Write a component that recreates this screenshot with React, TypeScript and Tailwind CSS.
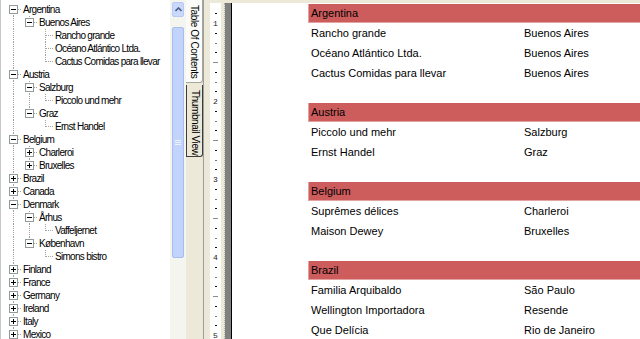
import React from 'react';

type Node = { label: string; open?: boolean; children?: Node[] };

const tree: Node[] = [
  {
    label: 'Argentina',
    open: true,
    children: [
      {
        label: 'Buenos Aires',
        open: true,
        children: [{ label: 'Rancho grande' }, { label: 'Océano Atlántico Ltda.' }, { label: 'Cactus Comidas para llevar' }],
      },
    ],
  },
  {
    label: 'Austria',
    open: true,
    children: [
      { label: 'Salzburg', open: true, children: [{ label: 'Piccolo und mehr' }] },
      { label: 'Graz', open: true, children: [{ label: 'Ernst Handel' }] },
    ],
  },
  {
    label: 'Belgium',
    open: true,
    children: [
      { label: 'Charleroi', children: [{ label: 'x' }] },
      { label: 'Bruxelles', children: [{ label: 'x' }] },
    ],
  },
  { label: 'Brazil', children: [{ label: 'x' }] },
  { label: 'Canada', children: [{ label: 'x' }] },
  {
    label: 'Denmark',
    open: true,
    children: [
      { label: 'Århus', open: true, children: [{ label: 'Vaffeljernet' }] },
      { label: 'København', open: true, children: [{ label: 'Simons bistro' }] },
    ],
  },
  { label: 'Finland', children: [{ label: 'x' }] },
  { label: 'France', children: [{ label: 'x' }] },
  { label: 'Germany', children: [{ label: 'x' }] },
  { label: 'Ireland', children: [{ label: 'x' }] },
  { label: 'Italy', children: [{ label: 'x' }] },
  { label: 'Mexico', children: [{ label: 'x' }] },
];

type Row = { label: string; level: number; box: '+' | '-' | null; last: boolean; first: boolean; guides: boolean[] };

function flatten(nodes: Node[], level: number, guides: boolean[], out: Row[]) {
  nodes.forEach((n, i) => {
    // root list continues below the visible area, so the root line never ends
    const last = level > 0 && i === nodes.length - 1;
    const hasKids = !!n.children && n.children.length > 0;
    out.push({
      label: n.label,
      level,
      box: hasKids ? (n.open ? '-' : '+') : null,
      last,
      first: level === 0 && i === 0,
      guides,
    });
    if (hasKids && n.open) flatten(n.children!, level + 1, [...guides, !last], out);
  });
  return out;
}

const rows = flatten(tree, 0, [], []);

const DOT = '#a3a39a';

function GuideCell({ on }: { on: boolean }) {
  return (
    <svg width="16" height="13" className="shrink-0" shapeRendering="crispEdges">
      {on && <line x1="8.5" y1="0" x2="8.5" y2="13" stroke={DOT} strokeDasharray="1 1" />}
    </svg>
  );
}

function NodeCell({ row }: { row: Row }) {
  return (
    <svg width="16" height="13" className="shrink-0" shapeRendering="crispEdges">
      {!row.first && <line x1="8.5" y1="0" x2="8.5" y2="6.5" stroke={DOT} strokeDasharray="1 1" />}
      {!row.last && <line x1="8.5" y1="6" x2="8.5" y2="13" stroke={DOT} strokeDasharray="1 1" />}
      <line x1="9" y1="6.5" x2="16" y2="6.5" stroke={DOT} strokeDasharray="1 1" />
      {row.box && (
        <g>
          <rect x="4.5" y="2.5" width="8" height="8" fill="#fff" stroke="#919b9c" />
          <line x1="6" y1="6.5" x2="11" y2="6.5" stroke="#000" />
          {row.box === '+' && <line x1="8.5" y1="4" x2="8.5" y2="9" stroke="#000" />}
        </g>
      )}
    </svg>
  );
}

function TreeRow({ row }: { row: Row }) {
  return (
    <div className="flex h-[13px] items-center pl-[4px]">
      {row.guides.map((g, i) => (
        <GuideCell key={i} on={g} />
      ))}
      <NodeCell row={row} />
      <span className="ml-[2px] whitespace-nowrap text-[10px] leading-[13px] tracking-[-0.7px] text-black">{row.label}</span>
    </div>
  );
}

function Scrollbar() {
  return (
    <div className="flex w-[16px] shrink-0 flex-col items-center bg-[#f5f5f0] pt-[2px]">
      <div className="flex h-[15px] w-[12px] items-center justify-center rounded-[2px] border border-[#b7c9f4] bg-[#c9d8fb]">
        <svg width="7" height="5" viewBox="0 0 7 5">
          <path d="M0.5 4 L3.5 1 L6.5 4" fill="none" stroke="#4d6185" strokeWidth="1.6" />
        </svg>
      </div>
      <div className="mt-[10px] flex h-[231px] w-[12px] flex-col items-center justify-center rounded-[2px] border border-[#a8bdf0] bg-[#c3d4fc]">
        <div className="mb-[1px] h-px w-[6px] bg-[#eef3ff]" />
        <div className="mb-[1px] h-px w-[6px] bg-[#eef3ff]" />
        <div className="h-px w-[6px] bg-[#eef3ff]" />
      </div>
    </div>
  );
}

function Ruler() {
  const ticks: React.ReactNode[] = [];
  for (let i = -2; i < 40; i++) {
    const y = Math.round(20 + i * 9.75);
    if (y < 2 || y > 340) continue;
    const m = ((i % 8) + 8) % 8;
    if (m === 0) {
      ticks.push(
        <text key={i} x="5.5" y={y + 3} fontSize="8" textAnchor="middle" fontFamily="'Liberation Mono', monospace" fill="#222">
          {i / 8 + 1}
        </text>
      );
    } else if (m === 4) {
      ticks.push(<rect key={i} x="3" y={y} width="5" height="1" fill="#8a8a8a" />);
    } else {
      ticks.push(<rect key={i} x="5" y={y} width="2" height="1" fill={m % 2 ? '#111' : '#777'} />);
    }
  }
  return (
    <svg width="11" height="336" className="block">
      {ticks}
    </svg>
  );
}

type Group = { country: string; rows: [string, string][] };

const groups: Group[] = [
  {
    country: 'Argentina',
    rows: [
      ['Rancho grande', 'Buenos Aires'],
      ['Océano Atlántico Ltda.', 'Buenos Aires'],
      ['Cactus Comidas para llevar', 'Buenos Aires'],
    ],
  },
  {
    country: 'Austria',
    rows: [
      ['Piccolo und mehr', 'Salzburg'],
      ['Ernst Handel', 'Graz'],
    ],
  },
  {
    country: 'Belgium',
    rows: [
      ['Suprêmes délices', 'Charleroi'],
      ['Maison Dewey', 'Bruxelles'],
    ],
  },
  {
    country: 'Brazil',
    rows: [
      ['Familia Arquibaldo', 'São Paulo'],
      ['Wellington Importadora', 'Resende'],
      ['Que Delícia', 'Rio de Janeiro'],
    ],
  },
];

export default function App() {
  return (
    <div className="flex h-[339px] w-[640px] overflow-hidden bg-[#ece9d8] font-['Liberation_Sans',Arial,sans-serif]">
      {/* TREE PANEL */}
      <div className="flex w-[186px] shrink-0 border-r border-[#8c8c8c]">
        <div className="w-[170px] shrink-0 overflow-hidden border-l border-[#c8c8c8] bg-white pt-[3px]">
          {rows.map((r, i) => (
            <TreeRow key={i} row={r} />
          ))}
        </div>
        <Scrollbar />
      </div>

      {/* VERTICAL TABS */}
      <div className="flex w-[18px] shrink-0 flex-col border-r border-[#9d9d9d]">
        <div className="flex h-[83px] items-start justify-center rounded-br-[3px] border-r border-b border-[#a7a69a] bg-[#fbfbf9] pt-[5px]">
          <span className="text-[10px] leading-none tracking-[-0.4px] text-black [writing-mode:vertical-rl]">Table Of Contents</span>
        </div>
        <div className="mt-[2px] flex h-[72px] items-start justify-center rounded-br-[3px] border-r border-b border-l border-[#3d3d3d] bg-[#ece9d8] pt-[5px]">
          <span className="text-[10px] leading-none tracking-[-0.4px] text-black [writing-mode:vertical-rl]">Thumbnail View</span>
        </div>
      </div>

      <div className="w-[6px] shrink-0" />

      {/* RULER */}
      <div className="mt-[3px] w-[11px] shrink-0 bg-white">
        <Ruler />
      </div>
      <div className="mt-[3px] w-[4px] shrink-0 border-r border-dotted border-[#b5b3a6]" />
      <div className="mt-[3px] w-[7px] shrink-0 border-r border-black bg-[#808080]" />

      {/* PAGE */}
      <div className="mt-[3px] flex-1 overflow-hidden bg-white pl-[76px] pt-[1px] text-[11px] text-black">
        {groups.map((g) => (
          <div key={g.country} className="mb-[20px]">
            <div className="flex h-[19px] items-center border-b border-l border-[#e3a3a3] bg-[#cd5c5c] pl-[2px]">
              {g.country}
            </div>
            {g.rows.map(([name, city]) => (
              <div key={name} className="flex h-[20px] items-center pl-[3px]">
                <span className="w-[213px] shrink-0 whitespace-nowrap">{name}</span>
                <span className="whitespace-nowrap">{city}</span>
              </div>
            ))}
          </div>
        ))}
      </div>
    </div>
  );
}
